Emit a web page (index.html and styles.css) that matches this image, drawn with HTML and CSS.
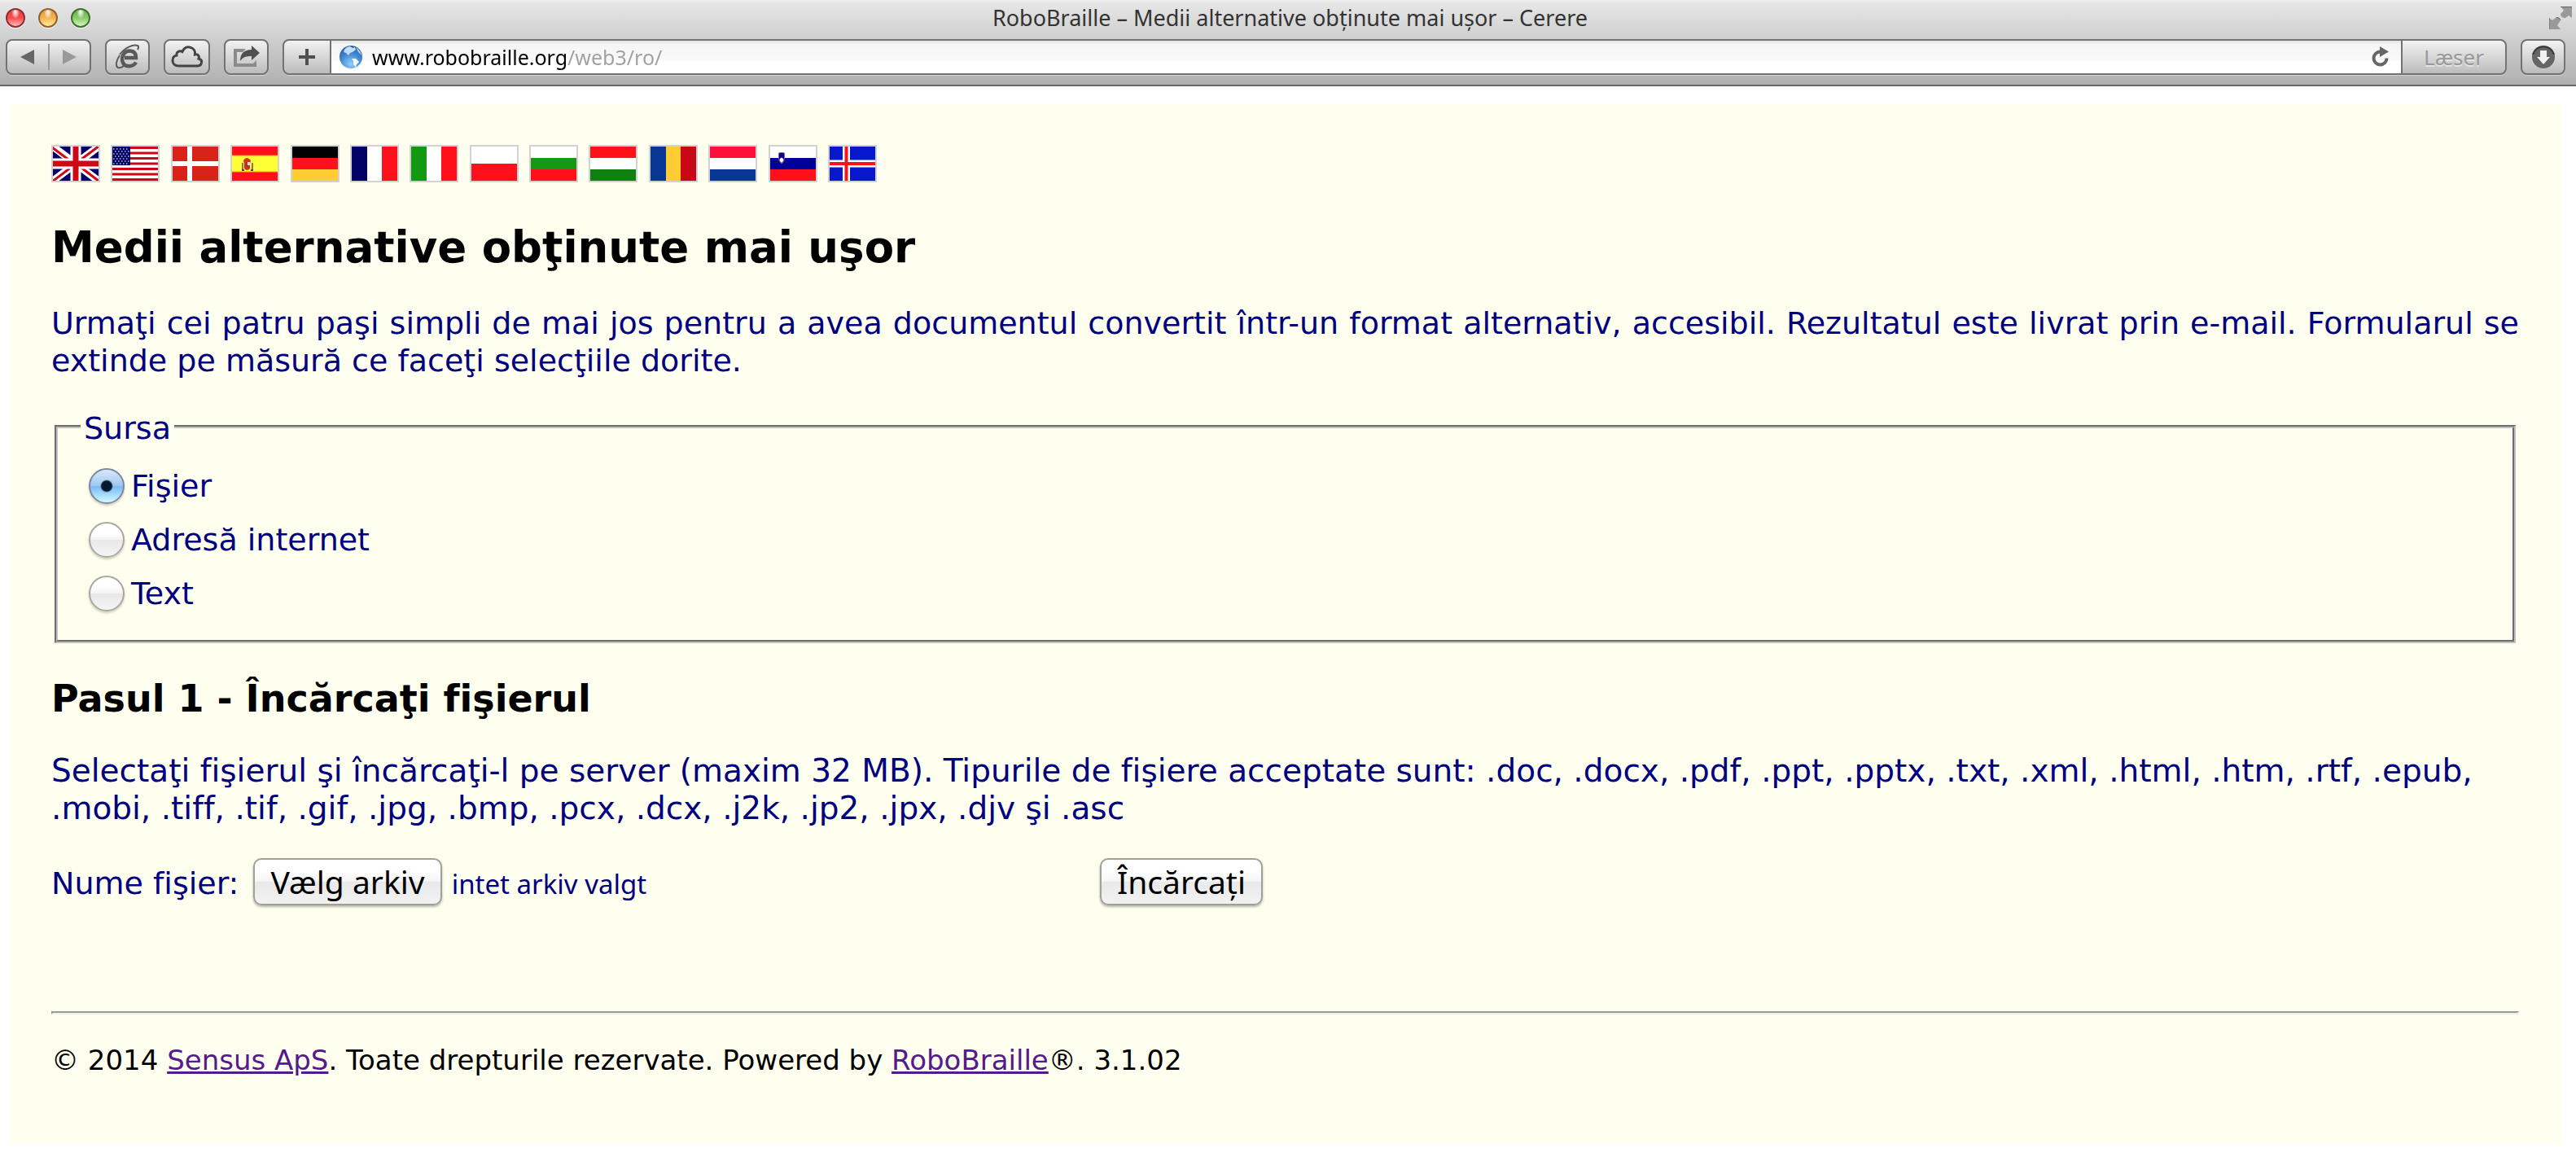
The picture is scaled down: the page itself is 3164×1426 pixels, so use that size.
FILE: index.html
```html
<!DOCTYPE html>
<html lang="ro">
<head>
<meta charset="utf-8">
<title>RoboBraille – Medii alternative obţinute mai uşor – Cerere</title>
<link rel="stylesheet" href="styles.css">
</head>
<body>
<header class="browser">
  <div class="titlebar">
    <div class="lights">
      <button class="light light-close" aria-label="Luk"></button>
      <button class="light light-min" aria-label="Minimer"></button>
      <button class="light light-zoom" aria-label="Zoom"></button>
    </div>
    <div class="window-title">RoboBraille – Medii alternative obţinute mai uşor – Cerere</div>
    <button class="fullscreen" aria-label="Fuld skærm">
      <svg width="28" height="28" viewBox="0 0 28 28"><path d="M14 0h14v14l-4-3-4 3q-6 0-6-5l4-4zM14 17q0-4-5-4l-5 4-4-3v14h14l-4-5z" fill="#999"/><path d="M14 0.500h14M0 14v13.500M9 13.500q4 0 5 3" fill="none" stroke="#666"/></svg>
    </button>
  </div>
  <div class="toolbar">
    <div class="tool nav">
      <button class="nav-half" aria-label="Tilbage"><svg width="18" height="18" viewBox="0 0 18 18"><path d="M17 0v18L0 9z" fill="#666"/></svg></button>
      <button class="nav-half" aria-label="Frem"><svg width="18" height="18" viewBox="0 0 18 18"><path d="M1 0v18L18 9z" fill="#999"/></svg></button>
    </div>
    <button class="tool tool-ie" aria-label="Internet Explorer">
      <svg width="30" height="32" viewBox="0 0 30 32"><g fill="none" stroke="#5a5a5a"><path d="M25 22.500C22 28 13 29 9.500 24C6 18 9 9 17 8.500C23 8.500 25 12 25 17H11" stroke-width="4.500"/><path d="M5 13C12 4 22 0 27 2C29 3 28 5 27 7M5 14C1 20-1 27 3 29C6 30 10 27 12 25" stroke-width="2"/></g></svg>
    </button>
    <button class="tool tool-cloud" aria-label="iCloud-faner">
      <svg width="40" height="30" viewBox="0 0 40 30"><path d="M10 26C4 26 2 22.500 2 19.500C2 16 4 13.500 7 13C6 8.500 11 6.500 14 8.500C16 4 19 2 23 3C28 4 30 8 29.500 12C34 11 35 15 34 17C37 18 38 20 37.500 22C37 25 34.500 26 32 26z" fill="none" stroke="#444" stroke-width="3"/></svg>
    </button>
    <button class="tool tool-share" aria-label="Del">
      <svg width="32" height="28" viewBox="0 0 32 28"><path d="M15 4H0v22h28v-8l-4 4H4V8h7z" fill="#8b8b8b"/><path d="M8 19Q8 5 22 5V0L32 9 22 18V13Q12 12 8 19z" fill="#505050"/></svg>
    </button>
    <div class="tool address">
      <button class="add" aria-label="Tilføj bogmærke"><svg width="20" height="20" viewBox="0 0 20 20"><path d="M10 0v20M0 10h20" stroke="#505050" stroke-width="4"/></svg></button>
      <div class="field">
        <svg width="30" height="30" viewBox="0 0 30 30"><defs><radialGradient id="globe" cx=".5" cy=".8" r=".8"><stop offset="0" stop-color="#8fd0ff"/><stop offset=".6" stop-color="#3f83cf"/><stop offset="1" stop-color="#2a5ca6"/></radialGradient></defs><circle cx="15" cy="15" r="14" fill="url(#globe)"/><path d="M7 6Q10 2 14 2L17 4 20 3 21 6 17 9 14 10 12 13 9 10 6 9z" fill="#c4e0f8"/><path d="M16 17L21 17 25 21 22 24 21 28 18 24 18 20z" fill="#f4faff"/><path d="M21 3Q27 7 28 13L24 9z" fill="#a8d0f2"/></svg>
        <input class="url" type="text" aria-label="Adresse" value="www.robobraille.org/web3/ro/">
        <button class="reload" aria-label="Genindlæs"><svg width="22" height="26" viewBox="0 0 22 26"><path d="M18.500 14.500a8 8 0 1 1-8-8H13" fill="none" stroke="#666" stroke-width="4"/><path d="M10 0v13l11-6.500z" fill="#666"/></svg></button>
      </div>
      <button class="reader" disabled>Læser</button>
    </div>
    <button class="tool tool-down" aria-label="Overførsler">
      <svg width="28" height="28" viewBox="0 0 28 28"><circle cx="14" cy="14" r="14" fill="#666"/><path d="M1 11a13.500 13.500 0 0 1 26 0" fill="none" stroke="#3a3a3a" stroke-width="2"/><path d="M10 6h8v8h4L14 23 6 14h4z" fill="#f2f2f2"/></svg>
    </button>
  </div>
</header>
<main class="page">
  <nav class="flags" aria-label="Limba">
    <a href="#" class="flag" aria-label="English (UK)"><svg viewBox="0 0 56 42"><path fill="#006" d="M0 0h56v42H0z"/><path d="M0 0l56 42M56 0L0 42" stroke="#fff" stroke-width="9"/><path d="M-1 1l20 15M57-1L33 17M-1 43l24-18M57 43L35 26" stroke="#cc0a16" stroke-width="3"/><path d="M28 0v42M0 21h56" stroke="#fff" stroke-width="13"/><path d="M28 0v42M0 21h56" stroke="#cc0a16" stroke-width="7"/></svg></a>
    <a href="#" class="flag" aria-label="English (US)"><svg viewBox="0 0 56 42"><path fill="#fff" d="M0 0h56v42H0z"/><path d="M0 1.500h56M0 8h56M0 14.500h56M0 21h56M0 27.500h56M0 34h56M0 40.500h56" stroke="#cc0a16" stroke-width="3"/><path fill="#006" d="M0 0h22v23H0z"/><path d="M1 3h20M1 9h20M1 15h20M1 21h20" stroke="#bbc" stroke-width="1.500" stroke-dasharray="1.500 2.500"/><path d="M3 6h18M3 12h18M3 18h18" stroke="#bbc" stroke-width="1.500" stroke-dasharray="1.500 2.500"/></svg></a>
    <a href="#" class="flag" aria-label="Dansk"><svg viewBox="0 0 56 42"><path fill="#d8231a" d="M0 0h56v42H0z"/><path d="M21 0v42M0 21h56" stroke="#fff" stroke-width="6"/></svg></a>
    <a href="#" class="flag" aria-label="Español"><svg viewBox="0 0 56 42"><path fill="#ff101a" d="M0 0h56v42H0z"/><path fill="#ffff38" stroke="#f90" d="M-1 11h58v20H-1z"/><path d="M14 17q4-6 9 0l-1 4v6q-3.500 4-7 0v-6z" fill="#d0301c"/><path d="M19 19h3v4h-3z" fill="#ecd0dc"/><path d="M17 23h3v2h-3z" fill="#456"/><path d="M13 20v9M25 20v9" stroke="#a66" stroke-width="2"/><path d="M12 29h3M23 29h3" stroke="#446" stroke-width="2"/></svg></a>
    <a href="#" class="flag" aria-label="Deutsch"><svg viewBox="0 0 56 42"><path d="M0 0h56v14H0z"/><path fill="#ff101a" d="M0 14h56v14H0z"/><path fill="#fc3" d="M0 28h56v14H0z"/></svg></a>
    <a href="#" class="flag" aria-label="Français"><svg viewBox="0 0 56 42"><path fill="#fff" d="M0 0h56v42H0z"/><path fill="#006" d="M0 0h19v42H0z"/><path fill="#ff101a" d="M37 0h19v42H37z"/></svg></a>
    <a href="#" class="flag" aria-label="Italiano"><svg viewBox="0 0 56 42"><path fill="#fff" d="M0 0h56v42H0z"/><path fill="#191" d="M0 0h19v42H0z"/><path fill="#ff101a" d="M37 0h19v42H37z"/></svg></a>
    <a href="#" class="flag" aria-label="Polski"><svg viewBox="0 0 56 42"><path fill="#fff" d="M0 0h56v21H0z"/><path fill="#ff101a" d="M0 21h56v21H0z"/></svg></a>
    <a href="#" class="flag" aria-label="Български"><svg viewBox="0 0 56 42"><path fill="#fff" d="M0 0h56v14H0z"/><path fill="#169816" d="M0 14h56v14H0z"/><path fill="#ff101a" d="M0 28h56v14H0z"/></svg></a>
    <a href="#" class="flag" aria-label="Magyar"><svg viewBox="0 0 56 42"><path fill="#ff101a" d="M0 0h56v14H0z"/><path fill="#fff" d="M0 14h56v14H0z"/><path fill="#108010" d="M0 28h56v14H0z"/></svg></a>
    <a href="#" class="flag" aria-label="Română"><svg viewBox="0 0 56 42"><path fill="#fc3" d="M0 0h56v42H0z"/><path fill="#073694" d="M0 0h19v42H0z"/><path fill="#c80814" d="M37 0h19v42H37z"/></svg></a>
    <a href="#" class="flag" aria-label="Nederlands"><svg viewBox="0 0 56 42"><path fill="#ff103c" d="M0 0h56v14H0z"/><path fill="#fff" d="M0 14h56v14H0z"/><path fill="#073694" d="M0 28h56v14H0z"/></svg></a>
    <a href="#" class="flag" aria-label="Slovenščina"><svg viewBox="0 0 56 42"><path fill="#fff" d="M0 0h56v14H0z"/><path fill="#009" d="M0 14h56v14H0z"/><path fill="#ff101a" d="M0 28h56v14H0z"/><path d="M10.500 8q3.500-1.500 7 0v7q-1 4-3.500 6-2.500-2-3.500-6z" fill="#009" stroke="#a4586e"/><path d="M11.500 16q2.500-5 5 0 0 2-2.500 4-2.500-2-2.500-4z" fill="#fff"/></svg></a>
    <a href="#" class="flag" aria-label="Íslenska"><svg viewBox="0 0 56 42"><path fill="#0818cc" d="M0 0h56v42H0z"/><path d="M20.500 0v42M0 21h56" stroke="#fff" stroke-width="9"/><path d="M20.500 0v42M0 21h56" stroke="#ff101a" stroke-width="4"/></svg></a>
  </nav>
  <h1 class="title">Medii alternative obţinute mai uşor</h1>
  <p class="text intro">Urmaţi cei patru paşi simpli de mai jos pentru a avea documentul convertit într-un format alternativ, accesibil. Rezultatul este livrat prin e-mail. Formularul se extinde pe măsură ce faceţi selecţiile dorite.</p>
  <form class="form">
    <fieldset class="source">
      <legend class="legend">Sursa</legend>
      <label class="option"><input class="radio" type="radio" name="source" checked>Fişier</label>
      <label class="option"><input class="radio" type="radio" name="source">Adresă internet</label>
      <label class="option"><input class="radio" type="radio" name="source">Text</label>
    </fieldset>
    <h2 class="step">Pasul 1 - Încărcaţi fişierul</h2>
    <p class="text formats">Selectaţi fişierul şi încărcaţi-l pe server (maxim 32 MB). Tipurile de fişiere acceptate sunt: .doc, .docx, .pdf, .ppt, .pptx, .txt, .xml, .html, .htm, .rtf, .epub, .mobi, .tiff, .tif, .gif, .jpg, .bmp, .pcx, .dcx, .j2k, .jp2, .jpx, .djv şi .asc</p>
    <div class="upload">
      <div class="file-row">
        <label for="pick">Nume fişier:</label>
        <button class="button" id="pick" type="button">Vælg arkiv</button>
        <span class="file-name">intet arkiv valgt</span>
      </div>
      <button class="button" type="submit">Încărcaţi</button>
    </div>
  </form>
  <hr class="rule">
  <footer class="footer">© 2014 <a href="#">Sensus ApS</a>. Toate drepturile rezervate. Powered by <a href="#">RoboBraille</a>®. 3.1.02</footer>
</main>
</body>
</html>
```
FILE: styles.css
```css
* { box-sizing: border-box; }
body { margin: 0; background: #fff; font: 38px/46px "DejaVu Sans", Verdana, sans-serif; font-variant-ligatures: none; color: #000; }
svg { display: block; }
button { margin: 0; padding: 0; border: 0; background: none; font: inherit; }

/* Browser window */
.browser { display: flex; flex-direction: column; height: 106px; border-bottom: 2px solid #666; background: linear-gradient(#f2f2f2 0, #e6e6e6 4px, #b0b0b0 100%); font-family: "Noto Sans", "Lucida Grande", sans-serif; font-size: 26px; }
.titlebar { display: grid; grid-template-columns: 1fr auto 1fr; align-items: center; height: 48px; padding: 0 2px 4px 7px; }
.lights { display: flex; gap: 16px; }
.light { width: 24px; height: 24px; border-radius: 50%; box-shadow: 0 1px 1px #fff; }
.light-close { border: 2px solid #8f2f2f; background: radial-gradient(ellipse at 50% 15%, #fff 0, transparent 35%), linear-gradient(#e24848, #fb4a4a 50%, #ffbcbc); }
.light-min { border: 2px solid #96602a; background: radial-gradient(ellipse at 50% 15%, #fff 0, transparent 35%), linear-gradient(#e09a3c, #f5b350 50%, #fff09c); }
.light-zoom { border: 2px solid #3f7030; background: radial-gradient(ellipse at 50% 15%, #fff 0, transparent 35%), linear-gradient(#68ac48, #88cc68 50%, #d8fabc); }
.window-title { color: #333; font-size: 27px; line-height: 36px; }
.fullscreen { justify-self: end; margin-right: 3px; }
.toolbar { display: flex; padding: 0 13px 0 7px; gap: 17px; }
.tool { display: flex; align-items: center; justify-content: center; height: 44px; border: 2px solid #727272; border-radius: 8px; background: linear-gradient(#f2f2f2, #bcbcbc); box-shadow: 0 1px 0 #d4d4d4; }
.nav { width: 105px; }
.nav-half { display: flex; flex: 1; align-items: center; justify-content: center; height: 32px; }
.nav-half + .nav-half { border-left: 2px solid #999; }
.tool-ie, .tool-share, .tool-down { width: 55px; }
.tool-cloud { width: 57px; }
.address { flex: 1; overflow: hidden; }
.add { display: flex; align-items: center; justify-content: center; width: 58px; height: 40px; border-right: 2px solid #727272; }
.field { display: flex; flex: 1; align-items: center; gap: 11px; height: 40px; padding: 0 14px 0 9px; background: linear-gradient(#e4e4e4, #f5f5f5 5px, #fafafa 24px, #fff 25px); }
.url { flex: 1; min-width: 0; height: 38px; padding: 0; border: 0; background: linear-gradient(90deg, #000 238px, #a0a0a0 238px); background-clip: text; -webkit-text-fill-color: transparent; font: inherit; font-size: 25px; outline: 0; }
.reader { width: 128px; height: 40px; border-left: 2px solid #727272; color: #999; text-shadow: 0 2px 0 #e4e4e4; line-height: 38px; }

/* Page */
.page { margin: 22px 18px 20px 13px; padding: 50px 52px 80px 50px; background: #ffffef; }
.flags { display: flex; justify-content: space-between; max-width: 1014px; }
.flag { display: block; width: 60px; height: 46px; border: 2px solid #d2d2d2; }
.flag svg { width: 56px; height: 42px; }
.title { margin: 46px 0 0; font-size: 53px; line-height: 68px; }
.text { margin: 0; color: #000080; }
.intro { margin-top: 36px; text-align: justify; }
.formats { font-size: 39px; }
.form { color: #000080; }
.source { margin: 33px 4px 0; padding: 15px 28px 24px; border: 4px groove #c0c0c0; }
.legend { padding: 4px 4px 0; }
.option { display: flex; align-items: center; gap: 8px; height: 66px; }
.radio { appearance: none; width: 44px; height: 44px; margin: 0 0 0 10px; border: 2px solid #a8a8a0; border-radius: 50%; background: linear-gradient(#fff 30%, #f2f2f2 50%, #e8e8e8 51%, #f5f5f5); box-shadow: 0 2px 3px #ccccb8; }
.radio:checked { border-color: #7f86a0; background: radial-gradient(circle, #001830 6px, transparent 8px), linear-gradient(#d8e8fa, #a0c8f0 49%, #78b8f4 50%, #d0fcff); }
.step { margin: 40px 0 38px; color: #000; font-size: 46px; line-height: 56px; }
.upload { display: flex; align-items: center; margin-top: 38px; }
.file-row { display: flex; align-items: baseline; width: 1288px; }
.button { height: 58px; padding: 0 19px; border: 2px solid #a0a096; border-radius: 10px; background: linear-gradient(#fff 25%, #f5f5f5 49%, #e9e9e9 50%, #f2f2f2); box-shadow: 0 2px 3px #b8b8a8; color: #000; font-family: "Noto Sans", "Lucida Grande", sans-serif; font-size: 39px; line-height: 54px; }
.file-row .button { margin: 0 12px 0 18px; }
.file-name { font-family: "Noto Sans", "Lucida Grande", sans-serif; font-size: 33px; }
.rule { height: 4px; margin: 130px 0 0; border: 2px solid; border-color: #999 #eee #eee #999; }
.footer { margin-top: 33px; font-size: 34px; }
.footer a { color: #551a8b; }
```
